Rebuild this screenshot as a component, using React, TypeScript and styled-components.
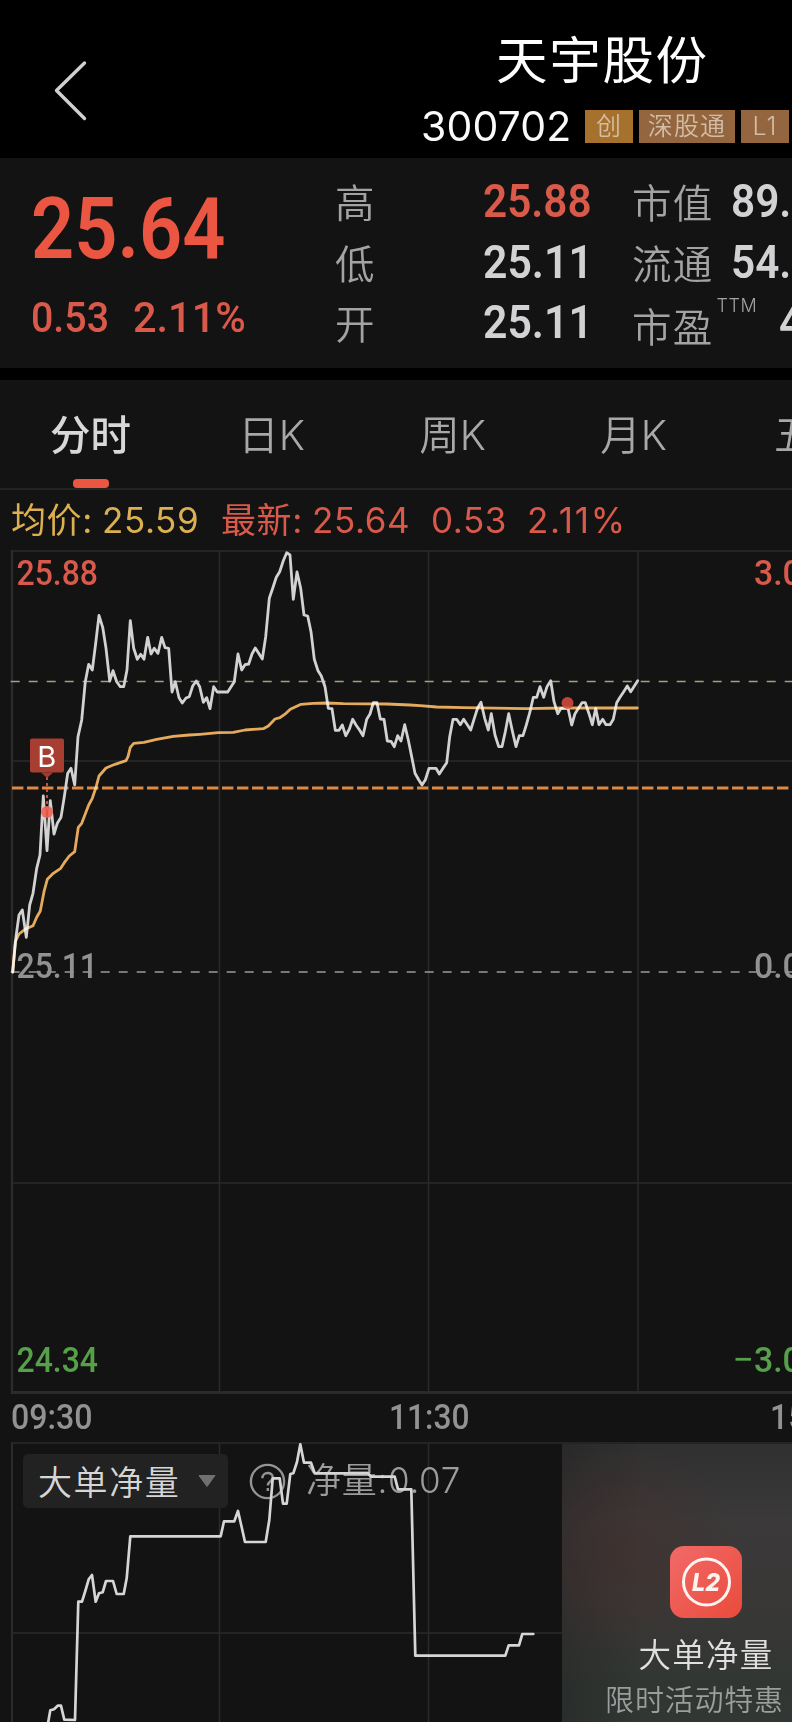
import React from 'react';
import styled, { createGlobalStyle } from 'styled-components';

const CJK = '"Noto Sans CJK SC", sans-serif';
const DIGIT = 'Roboto, "Noto Sans CJK SC", sans-serif';
const UI = 'Inter, "Noto Sans CJK SC", sans-serif';

const color = {
  panel: '#131313',
  grid: '#2b2b2b',
  red: '#d9594a',
  redStrong: '#ea5641',
  light: '#d2d2d4',
  label: '#a3a3a3',
  muted: '#929292',
  green: '#57a04a',
  amber: '#dcb050',
  average: '#e3a450',
};

const GlobalStyle = createGlobalStyle`
  * { box-sizing: border-box; }
  body { margin: 0; background: ${color.panel}; overflow: hidden; }
`;

const Page = styled.main`
  width: 792px;
  height: 1722px;
  overflow: hidden;
  background: ${color.panel};
  font-family: ${CJK};
  white-space: nowrap;
`;

const Header = styled.header`
  display: flex;
  height: 158px;
  background: #000;
`;

const BackButton = styled.button`
  width: 110px;
  height: 158px;
  padding: 0;
  border: 0;
  background: none;
`;

const Identity = styled.div`
  margin-left: 311px;
  padding-top: 19px;
`;

const StockName = styled.h1`
  margin: 0 0 0 75px;
  font: 400 51.5px/76px ${CJK};
  letter-spacing: 1.7px;
  color: #fff;
`;

const CodeRow = styled.div`
  display: flex;
  align-items: center;
  gap: 6px;
  height: 62px;
`;

const Code = styled.span`
  width: 158px;
  font: 400 41px/60px ${UI};
  letter-spacing: 0.1px;
  color: #fafafa;
`;

const Tag = styled.span<{ $bg: string; $w: number }>`
  width: ${p => p.$w}px;
  height: 33px;
  text-align: center;
  background: ${p => p.$bg};
  color: #d3bda6;
  font: 350 25px/32px ${UI};
  letter-spacing: 1.2px;
`;

const Quote = styled.section`
  display: grid;
  grid-template-columns: 335px 148px 149px 320px;
  height: 210px;
  overflow: hidden;
`;

const Digits = styled.span<{ $size: number; $stretch?: number; $color?: string; $weight?: number; $indent?: number }>`
  display: inline-block;
  margin-left: ${p => p.$indent ?? 0}px;
  font-family: ${DIGIT};
  font-size: ${p => p.$size}px;
  font-weight: ${p => p.$weight ?? 500};
  color: ${p => p.$color ?? color.light};
  transform: scaleX(${p => p.$stretch ?? 0.9});
  transform-origin: left center;
`;

const PriceColumn = styled.div`
  padding: 21px 0 0 31px;
`;

const Price = styled.div`
  line-height: 100px;
  height: 100px;
`;

const Change = styled.div`
  display: grid;
  grid-template-columns: 102px auto;
  margin-top: 13px;
  line-height: 50px;
`;

const Stats = styled.div`
  display: grid;
  grid-auto-rows: 60.5px;
  align-content: start;
  padding-top: 13px;
  line-height: 60px;
`;

const StatLabel = styled.span<{ $drop?: number }>`
  padding-top: ${p => p.$drop ?? 0}px;
  font-size: 39.5px;
  font-weight: 350;
  color: ${color.label};
  letter-spacing: 1.2px;
`;

const StatPair = styled.div<{ $gap: number }>`
  display: flex;
  gap: ${p => p.$gap}px;
`;

const Ttm = styled.sup`
  width: 41px;
  margin-left: 3px;
  font: 300 18px/20px ${UI};
  letter-spacing: 0.6px;
  padding-top: 4px;
  color: ${color.label};
`;

const Divider = styled.div`
  height: 12px;
  background: #000;
`;

const Tabs = styled.nav`
  display: flex;
  height: 110px;
  border-bottom: 2px solid #222;
`;

const Tab = styled.button<{ $active?: boolean }>`
  display: flex;
  flex: 0 0 181px;
  flex-direction: column;
  align-items: center;
  padding: 26px 0 0;
  border: 0;
  background: none;
  font: ${p => (p.$active ? 500 : 350)} 40.5px/60px ${UI};
  color: ${p => (p.$active ? '#d8d8d8' : '#a8a8a8')};

  &::after {
    content: '';
    width: 36px;
    height: 9px;
    margin-top: 13px;
    border-radius: 4px;
    background: ${p => (p.$active ? color.redStrong : 'transparent')};
  }
`;

const Legend = styled.div`
  display: grid;
  grid-template-columns: 91px 119px 91px 119px 96px auto;
  height: 50px;
  padding-left: 11px;
  font: 400 35px/61px ${UI};
  color: ${color.red};
`;

const LegendItem = styled.span<{ $color?: string; $spacing?: number }>`
  color: ${p => p.$color ?? color.red};
  letter-spacing: ${p => p.$spacing ?? 0.6}px;
`;

const Chart = styled.svg`
  display: block;
`;

const AverageLine = styled.polyline`
  mix-blend-mode: screen;
`;

const FlowPanel = styled.section`
  display: grid;
  width: 850px;
  height: 282px;

  > * { grid-area: 1 / 1; }
`;

const FlowTools = styled.div`
  display: flex;
  align-items: center;
  height: 54px;
  margin: 14px 0 0 23px;
`;

const Selector = styled.button`
  display: flex;
  align-items: center;
  gap: 18px;
  width: 205px;
  height: 54px;
  padding: 0 0 1px 15px;
  border: 0;
  border-radius: 5px;
  background: #222;
  color: #d6d6d6;
  font: 350 34px/50px ${CJK};
  letter-spacing: 1.6px;
`;

const Help = styled.svg`
  margin-left: 21px;
`;

const FlowValue = styled.span`
  margin-left: 20px;
  padding-bottom: 2px;
  font: 350 35px/50px ${UI};
  letter-spacing: 0.7px;
  color: #9c9c9c;
`;

const FlowLine = styled(Chart)`
  z-index: 1;
`;

const Promo = styled.aside`
  z-index: 2;
  display: flex;
  flex-direction: column;
  align-items: center;
  justify-self: end;
  width: 288px;
  height: 278px;
  margin-top: 4px;
  padding-top: 102px;
  background:
    radial-gradient(ellipse 110px 110px at 60px 105px, rgba(74, 40, 38, 0.35), transparent),
    linear-gradient(90deg, rgba(19, 19, 19, 0.25), transparent 80px),
    linear-gradient(#303030 0%, #3b3939 28%, #3a3837 55%, #323633 85%, #313733 100%);
`;

const PromoTitle = styled.div`
  margin-top: 10px;
  font-size: 32.5px;
  font-weight: 350;
  line-height: 50px;
  letter-spacing: 1.3px;
  color: #e0e0e0;
`;

const PromoNote = styled.div`
  margin: -2px 23px 0 0;
  font-size: 29px;
  font-weight: 350;
  line-height: 44px;
  letter-spacing: 0.8px;
  color: #9b9e9c;
`;

type Trace = { x: number; y: number; samples: number[] };

// Samples are stored in thirds of a pixel, relative to the origin of each stretch.
const toPoints = (traces: Trace[]) =>
  traces
    .map(({ x, y, samples }) => {
      const out: string[] = [];
      for (let i = 0; i < samples.length; i += 2) {
        out.push(`${(x + samples[i] / 3).toFixed(1)},${(y + samples[i + 1] / 3).toFixed(1)}`);
      }
      return out.join(' ');
    })
    .join(' ');

const priceTraces: Trace[] = [
  {
    x: 0, y: 540,
    samples: [38,1296, 48,1190, 57,1125, 67,1110, 79,1192, 89,1095, 99,1060, 110,985, 120,945, 130,768, 141,932, 151,782, 162,882, 172,850, 183,832, 193,770, 203,700, 213,685, 224,735, 234,590, 245,540, 256,425, 266,373, 277,390, 287,310, 297,226, 308,262, 318,325, 329,423, 339,392, 350,425, 361,440, 371,440, 381,390, 391,242, 401,325, 412,358, 422,343, 432,358, 443,292, 453,342, 463,325, 474,340, 485,292, 495,323, 506,325, 516,456, 526,425, 537,473, 547,489, 558,474, 568,470, 578,438, 589,423, 599,440, 610,487, 620,473, 630,506, 641,440, 652,456],
  },
  {
    x: 200, y: 540,
    samples: [83,456, 103,425, 114,342, 125,390, 135,374, 146,372, 156,342, 166,324, 176,340, 187,357, 197,290, 208,175, 218,145, 229,112, 239,95, 250,62, 260,38, 270,45, 280,178, 291,96, 302,145, 312,225, 323,228, 333,275, 343,358, 354,392, 364,408, 375,440, 385,505, 396,506, 406,571, 417,571, 427,555, 437,587, 448,568, 458,538, 468,555, 479,571, 489,587, 500,538, 510,522, 520,488, 531,488, 541,537, 552,538, 562,603, 573,604, 583,620, 593,587, 603,603, 614,554, 625,600, 635,650, 645,700, 656,719],
  },
  {
    x: 420, y: 640,
    samples: [6,435, 16,420, 27,385, 48,385, 58,402, 69,385, 80,368, 89,290, 99,238, 110,238, 121,254, 131,238, 142,254, 152,270, 163,235, 173,203, 183,187, 194,235, 205,270, 214,221, 225,285, 236,320, 246,320, 256,275, 266,221, 277,272, 288,320, 298,287, 309,287, 319,255, 330,215, 340,172, 350,172, 360,140, 371,172, 381,140, 392,122, 402,185, 413,221, 423,205, 444,205, 455,255, 465,221, 476,203, 486,188, 496,188, 507,221, 517,254, 527,205, 537,254, 548,238, 558,254, 570,254, 580,238, 590,188, 600,172, 611,155, 622,138, 632,155, 653,122],
  },
];

const averageTraces: Trace[] = [
  {
    x: 0, y: 540,
    samples: [38,1296, 46,1205, 57,1182, 75,1168, 99,1157, 110,1132, 121,1113, 132,1055, 142,1018, 160,1000, 182,985, 193,968, 208,948, 224,935, 235,862, 245,850, 266,795, 277,775, 287,745, 297,708, 318,684, 345,673, 378,662, 384,650, 391,622, 401,610, 432,607, 470,598, 520,589, 568,585],
  },
  {
    x: 200, y: 540,
    samples: [0,583, 55,578, 100,577, 135,570, 190,566, 205,558, 225,537, 240,533, 258,520, 271,508, 303,493, 340,490, 380,489, 430,491, 560,492, 630,495, 660,497],
  },
  { x: 420, y: 640, samples: [50,201, 130,203, 320,206, 430,204, 652,204] },
];

const flowTraces: Trace[] = [
  {
    x: 0, y: 1330,
    samples: [144,1180, 151,1141, 162,1138, 173,1127, 183,1127, 193,1169, 225,1170, 235,815, 246,815, 256,783, 266,748, 276,735, 287,815, 297,790, 308,787, 318,753, 339,753, 350,792, 371,792, 380,745, 391,619, 662,619, 672,574, 703,574, 714,543, 725,592, 735,636, 797,636, 808,570, 818,445, 839,445, 849,521, 860,521, 871,432, 880,430, 891,396, 901,343, 912,398, 933,398, 944,430, 1105,430, 1112,440],
  },
  { x: 392, y: 1330, samples: [8,440, 18,478, 58,478, 70,977, 340,977, 350,946, 381,946, 391,912, 424,912] },
];

const axisLabels = [
  { text: '25.88', x: 16.5, y: 584.5, w: 81.5, fill: color.red },
  { text: '25.11', x: 16.5, y: 978, w: 81.5, fill: color.muted },
  { text: '24.34', x: 16.5, y: 1371.5, w: 81.5, fill: color.green },
  { text: '3.07%', x: 754, y: 584.5, w: 92, fill: color.red },
  { text: '0.00%', x: 754, y: 978, w: 92, fill: color.muted },
  { text: '3.07%', x: 754, y: 1371.5, w: 92, fill: color.green },
  { text: '09:30', x: 11, y: 1428.5, w: 81.5, fill: color.muted },
  { text: '11:30', x: 389, y: 1428.5, w: 80.5, fill: color.muted },
  { text: '15:00', x: 770, y: 1428.5, w: 81.5, fill: color.muted },
];

const columns = [219.5, 428.5, 638];

function IntradayChart() {
  return (
    <Chart width="792" height="900" viewBox="0 540 792 900">
      <rect y="540" width="792" height="900" fill={color.panel} />
      <g stroke={color.grid} strokeWidth="1.5">
        {columns.map(x => <path key={x} d={`M${x} 551V1391`} />)}
        <path d="M11 551H792M11 761H792M11 1183H792" />
        <path d="M12 550V1394" strokeWidth="2.4" />
        <path d="M11 1392.5H792" strokeWidth="3" />
      </g>
      <path d="M10.7 681.5H792" stroke="#b09c7a" strokeWidth="1.6" strokeDasharray="9 9" />
      <path d="M10.7 972H792" stroke="#9a9a9a" strokeWidth="1.6" strokeDasharray="9 9" />
      <path d="M12 788H792" stroke="#de8a42" strokeWidth="2.8" strokeDasharray="11.4 3.6" />
      <g fontFamily="Roboto" fontSize="35" fontWeight="500">
        {axisLabels.map(l => (
          <text key={`${l.text}${l.y}`} x={l.x} y={l.y} fill={l.fill} textLength={l.w} lengthAdjust="spacingAndGlyphs">
            {l.text}
          </text>
        ))}
        <path d="M735.5 1359.3H751" stroke={color.green} strokeWidth="2.8" />
      </g>
      <g fill="none" strokeLinejoin="round" strokeLinecap="round" strokeWidth="2.8">
        <polyline points={toPoints(priceTraces)} stroke="#d2d2d2" />
        <AverageLine points={toPoints(averageTraces)} stroke={color.average} />
      </g>
      <path d="M47 777V812" stroke="#c94c3e" strokeWidth="2" strokeDasharray="3 3" />
      <circle cx="47" cy="812" r="6" fill="#f0604f" fillOpacity="0.9" />
      <circle cx="567.5" cy="703" r="6" fill="#d44b3d" fillOpacity="0.88" />
      <rect x="30" y="738.5" width="34" height="34" rx="2" fill="#b03f33" fillOpacity="0.95" />
      <path d="M41 772.5H53L47 778Z" fill="#a13a30" />
      <text x="46.8" y="766.8" fill="#fff" fontFamily="Inter" fontSize="29" textAnchor="middle">B</text>
    </Chart>
  );
}

function NetFlow() {
  return (
    <FlowPanel>
      <Chart width="792" height="282" viewBox="0 1440 792 282">
        <g stroke={color.grid} strokeWidth="1.5">
          <path d="M11 1443H792M11 1633H792" />
          {columns.map(x => <path key={x} d={`M${x} 1443V1722`} />)}
          <path d="M12 1442V1722" strokeWidth="2" />
        </g>
      </Chart>
      <FlowTools>
        <Selector>
          大单净量
          <svg width="18" height="12" viewBox="0 0 18 12"><path d="M1 .5H17L9 11.5Z" fill="#707070" stroke="#707070" strokeLinejoin="round" /></svg>
        </Selector>
        <Help width="37" height="37" viewBox="0 0 37 37" fill="none" stroke="#949494" strokeWidth="2.4">
          <circle cx="18.5" cy="18.5" r="16.6" />
          <path d="M13.4 15.2C13.4 8.2 23.8 8.4 23.8 14.5C23.8 18.4 18.8 18 18.8 22.5" />
          <path d="M18.8 25V28" />
        </Help>
        <FlowValue>净量:0.07</FlowValue>
      </FlowTools>
      <FlowLine width="792" height="282" viewBox="0 1440 792 282">
        <polyline points={toPoints(flowTraces)} fill="none" stroke="#d6d6d6" strokeWidth="2.7" strokeLinejoin="round" strokeLinecap="round" />
      </FlowLine>
      <Promo>
        <svg width="72" height="72" viewBox="0 0 72 72">
          <defs>
            <linearGradient id="badge" x1="0" y1="0" x2="1" y2="1">
              <stop offset="0" stopColor="#f26a68" />
              <stop offset="1" stopColor="#e94b3b" />
            </linearGradient>
          </defs>
          <rect width="72" height="72" rx="14" fill="url(#badge)" />
          <circle cx="36.5" cy="36" r="23" fill="none" stroke="#fff3f0" strokeWidth="3" />
          <text x="36" y="45" fill="#fff3f0" fontFamily="Inter" fontSize="25" fontWeight="800" fontStyle="italic" textAnchor="middle" textLength="28" lengthAdjust="spacingAndGlyphs">L2</text>
        </svg>
        <PromoTitle>大单净量</PromoTitle>
        <PromoNote>限时活动特惠</PromoNote>
      </Promo>
    </FlowPanel>
  );
}

export default function App() {
  return (
    <Page>
      <GlobalStyle />
      <Header>
        <BackButton aria-label="返回">
          <svg width="110" height="158" viewBox="0 0 110 158" fill="none" stroke="#d0d0d0" strokeWidth="3.4" strokeLinecap="round" strokeLinejoin="round">
            <path d="M84.5 63L56.5 90.5L84.5 118.5" />
          </svg>
        </BackButton>
        <Identity>
          <StockName>天宇股份</StockName>
          <CodeRow>
            <Code>300702</Code>
            <Tag $bg="#a5712c" $w={48}>创</Tag>
            <Tag $bg="#94663f" $w={96}>深股通</Tag>
            <Tag $bg="#94663f" $w={48}>L1</Tag>
          </CodeRow>
        </Identity>
      </Header>

      <Quote>
        <PriceColumn>
          <Price><Digits $size={86} $stretch={0.88} $color={color.redStrong} $weight={600}>25.64</Digits></Price>
          <Change>
            <Digits $size={43} $stretch={0.915} $color={color.red}>0.53</Digits>
            <Digits $size={43} $stretch={0.965} $color={color.red}>2.11%</Digits>
          </Change>
        </PriceColumn>
        <Stats>
          <StatLabel>高</StatLabel>
          <StatLabel>低</StatLabel>
          <StatLabel>开</StatLabel>
        </Stats>
        <Stats>
          <Digits $size={47} $stretch={0.9} $color={color.red} $weight={600}>25.88</Digits>
          <Digits $size={47} $stretch={0.91} $weight={600}>25.11</Digits>
          <Digits $size={47} $stretch={0.91} $weight={600}>25.11</Digits>
        </Stats>
        <Stats>
          <StatPair $gap={18}><StatLabel>市值</StatLabel><Digits $size={47} $weight={600}>89.25亿</Digits></StatPair>
          <StatPair $gap={18}><StatLabel>流通</StatLabel><Digits $size={47} $weight={600}>54.36亿</Digits></StatPair>
          <StatPair $gap={0}><StatLabel $drop={2.5}>市盈</StatLabel><Ttm>TTM</Ttm><Digits $size={47} $weight={600} $indent={22}>47.30</Digits></StatPair>
        </Stats>
      </Quote>
      <Divider />

      <Tabs>
        <Tab $active>分时</Tab>
        <Tab>日K</Tab>
        <Tab>周K</Tab>
        <Tab>月K</Tab>
        <Tab>五日</Tab>
      </Tabs>
      <Legend>
        <LegendItem $color={color.amber}>均价:</LegendItem>
        <LegendItem $color={color.amber}>25.59</LegendItem>
        <LegendItem>最新:</LegendItem>
        <LegendItem>25.64</LegendItem>
        <LegendItem>0.53</LegendItem>
        <LegendItem $spacing={1.7}>2.11%</LegendItem>
      </Legend>
      <IntradayChart />
      <NetFlow />
    </Page>
  );
}
